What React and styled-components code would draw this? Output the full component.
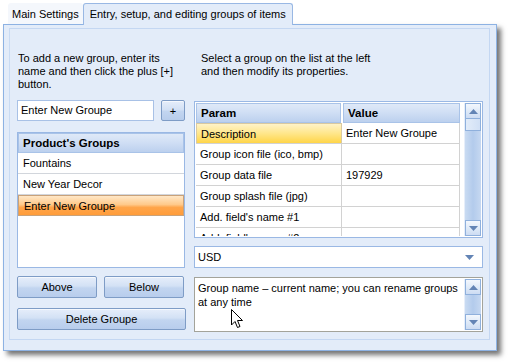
import React from 'react';
import styled, { createGlobalStyle } from 'styled-components';

const GlobalStyle = createGlobalStyle`
  html, body { margin: 0; padding: 0; background: #fff; }
  body {
    font-family: "Liberation Sans", Arial, sans-serif;
    font-size: 11px;
    color: #000;
  }
  * { box-sizing: border-box; }
`;

const Window = styled.div`
  width: 508px;
  height: 363px;
  padding: 3px 0 0 3px;
`;

const TabStrip = styled.div`
  display: flex;
  align-items: flex-end;
  height: 21px;
  padding-left: 5px;
`;

const Tab = styled.div`
  height: ${({ active }) => (active ? '22px' : '21px')};
  line-height: 21px;
  padding: 0 ${({ active }) => (active ? '6px' : '3px')};
  min-width: ${({ w }) => w}px;
  background: ${({ active }) => (active ? '#e3ecf9' : '#f4f7fc')};
  border: 1px solid ${({ active }) => (active ? '#99b8e4' : 'transparent')};
  border-bottom: none;
  border-radius: 3px 3px 0 0;
  margin-bottom: ${({ active }) => (active ? '-1px' : '0')};
  position: relative;
  z-index: 1;
  white-space: nowrap;
  font-size: 11px;
`;

const Panel = styled.div`
  width: 494px;
  height: 327px;
  border: 1px solid #8db2e3;
  background: #e3ecf9;
  padding: 3px 6px 10px 5px;
  box-shadow: 4px 4px 5px rgba(0, 0, 0, 0.55);
`;

const Frame = styled.div`
  height: 100%;
  border: 1px solid #c4d7f2;
  border-left-color: #c9dbf3;
  padding: 23px 5px 0 7px;
  display: grid;
  grid-template-columns: 168px 289px;
  column-gap: 9px;
`;

const Column = styled.div`
  display: flex;
  flex-direction: column;
`;

const Info = styled.div`
  height: 48px;
  line-height: 13px;
  padding-left: ${({ indent }) => indent || 0}px;
`;

const InputRow = styled.div`
  display: flex;
  justify-content: space-between;
`;

const TextInput = styled.div`
  width: 137px;
  height: 21px;
  border: 1px solid #a8c1e6;
  background: #fff;
  padding-left: 3px;
  line-height: 19px;
`;

const Button = styled.div`
  width: ${({ w }) => w}px;
  height: ${({ h }) => h || 22}px;
  border: 1px solid #7e9cc6;
  border-radius: 2px;
  background: linear-gradient(to bottom, #e6eefa 0%, #d3e1f5 45%, #c2d5f0 55%, #b8cdec 100%);
  box-shadow: inset 0 1px 0 #f5f8fd;
  display: flex;
  align-items: center;
  justify-content: center;
  margin-top: ${({ mt }) => mt || 0}px;
`;

const ButtonRow = styled.div`
  display: flex;
  justify-content: space-between;
  margin-top: 8px;
  padding-right: 1px;
`;

const ListBox = styled.div`
  margin-top: 11px;
  height: 136px;
  border: 1px solid #9ab8e4;
  background: #fff;
`;

const HeaderCell = styled.div`
  height: 20px;
  width: ${({ w }) => (w ? `${w}px` : 'auto')};
  line-height: 19px;
  padding-left: 4px;
  font-weight: bold;
  font-size: 11.5px;
  background: linear-gradient(to bottom, #dfe9f8 0%, #cfdef4 50%, #bcd0ee 100%);
  border: 1px solid #a9c3e8;
  margin-right: ${({ mr }) => mr || 0}px;
`;

const ListItem = styled.div`
  height: 21px;
  line-height: 20px;
  padding-left: 5px;
  border-bottom: 1px solid #d2d6dc;
  ${({ selected }) =>
    selected &&
    `
    background: linear-gradient(to bottom, #ffe7c7 0%, #ffc98a 45%, #ffa54a 60%, #ff9c3a 100%);
    border: 1px solid #c9a27a;
    border-bottom-color: #c9a27a;
  `}
`;

const Grid = styled.div`
  height: 137px;
  margin-top: 1px;
  border: 1px solid #9ab8e4;
  background: #fff;
  display: flex;
  padding: 1px;
`;

const GridBody = styled.div`
  flex: 1;
  overflow: hidden;
`;

const GridHeader = styled.div`
  display: flex;
`;

const GridRow = styled.div`
  display: flex;
  height: 21px;
  border-bottom: 1px solid #d2d2d2;
  width: 264px;
`;

const Cell = styled.div`
  width: ${({ w }) => (w ? `${w}px` : 'auto')};
  flex: ${({ w }) => (w ? 'none' : '1')};
  line-height: 20px;
  padding-left: 4px;
  white-space: nowrap;
  border-right: 1px solid #d2d2d2;
  ${({ hot }) =>
    hot &&
    `
    background: linear-gradient(to bottom, #fff3c8 0%, #ffe68a 50%, #ffd548 100%);
    border: 1px solid #d9c9a0;
    border-bottom: none;
  `}
`;

const ScrollBar = styled.div`
  width: 17px;
  margin-left: 4px;
  display: flex;
  flex-direction: column;
  background: linear-gradient(to right, #c9dbf2 0%, #b3cbec 50%, #c6d8f1 100%);
  border-left: 1px solid #e6eefa;
`;

const ScrollButton = styled.div`
  height: 16px;
  border: 1px solid #8fb0dc;
  background: linear-gradient(to bottom, #f3f7fd 0%, #dce8f7 60%, #cddcf3 100%);
  display: flex;
  align-items: center;
  justify-content: center;
`;

const Thumb = styled.div`
  height: 12px;
  border: 1px solid #8fb0dc;
  border-top: none;
  background: linear-gradient(to right, #e2ecf9, #d1e0f5);
`;

const Track = styled.div`
  flex: 1;
`;

const Combo = styled.div`
  margin-top: 8px;
  height: 22px;
  border: 1px solid #9ab8e4;
  background: #fff;
  display: flex;
  align-items: center;
  justify-content: space-between;
  padding: 0 8px 0 3px;
`;

const Memo = styled.div`
  position: relative;
  margin-top: 9px;
  height: 55px;
  border: 1px solid #a3a39a;
  background: #fff;
  display: flex;
  padding: 1px;
`;

const MemoText = styled.div`
  flex: 1;
  padding: 2px 0 0 2px;
  line-height: 14px;
`;

const Cursor = styled.svg`
  position: absolute;
  left: 36px;
  top: 31px;
`;

const Arrow = ({ down }) => (
  <svg width="9" height="5" viewBox="0 0 9 5">
    {down ? (
      <path d="M0 0 H9 L4.5 5 Z" fill="#6384b5" />
    ) : (
      <path d="M0 5 H9 L4.5 0 Z" fill="#6384b5" />
    )}
  </svg>
);

const rows = [
  ['Description', 'Enter New Groupe'],
  ['Group icon file (ico, bmp)', ''],
  ['Group data file', '197929'],
  ['Group splash file (jpg)', ''],
  ["Add. field's name #1", ''],
  ["Add. field's name #2", ''],
];

const groups = ['Fountains', 'New Year Decor', 'Enter New Groupe'];

const App = () => (
  <>
    <GlobalStyle />
    <Window>
      <TabStrip>
        <Tab w={72}>Main Settings</Tab>
        <Tab w={200} active>Entry, setup, and editing groups of items</Tab>
      </TabStrip>
      <Panel>
        <Frame>
          <Column>
            <Info indent={1}>
              To add a new group, enter its<br />
              name and then click the plus [+]<br />
              button.
            </Info>
            <InputRow>
              <TextInput>Enter New Groupe</TextInput>
              <Button w={24} h={21}>+</Button>
            </InputRow>
            <ListBox>
              <HeaderCell>Product's Groups</HeaderCell>
              {groups.map((g, i) => (
                <ListItem key={g} selected={i === 2}>{g}</ListItem>
              ))}
            </ListBox>
            <ButtonRow>
              <Button w={80}>Above</Button>
              <Button w={80}>Below</Button>
            </ButtonRow>
            <Button w={169} mt={10}>Delete Groupe</Button>
          </Column>
          <Column>
            <Info indent={7}>
              Select a group on the list at the left<br />
              and then modify its properties.
            </Info>
            <Grid>
              <GridBody>
                <GridHeader>
                  <HeaderCell w={145} mr={2}>Param</HeaderCell>
                  <HeaderCell w={117}>Value</HeaderCell>
                </GridHeader>
                {rows.map(([p, v], i) => (
                  <GridRow key={p}>
                    <Cell w={146} hot={i === 0}>{p}</Cell>
                    <Cell>{v}</Cell>
                  </GridRow>
                ))}
              </GridBody>
              <ScrollBar>
                <ScrollButton><Arrow /></ScrollButton>
                <Thumb />
                <Track />
                <ScrollButton><Arrow down /></ScrollButton>
              </ScrollBar>
            </Grid>
            <Combo>
              <span>USD</span>
              <Arrow down />
            </Combo>
            <Memo>
              <MemoText>
                Group name – current name; you can rename groups<br />
                at any time
              </MemoText>
              <ScrollBar>
                <ScrollButton><Arrow /></ScrollButton>
                <Track />
                <ScrollButton><Arrow down /></ScrollButton>
              </ScrollBar>
              <Cursor width="13" height="20" viewBox="0 0 13 20">
                <path
                  d="M0.5 0.5 L0.5 16 L4 12.5 L6.5 18.5 L9 17.5 L6.5 11.5 L11.5 11.5 Z"
                  fill="#fff"
                  stroke="#000"
                  strokeWidth="1"
                />
              </Cursor>
            </Memo>
          </Column>
        </Frame>
      </Panel>
    </Window>
  </>
);

export default App;
